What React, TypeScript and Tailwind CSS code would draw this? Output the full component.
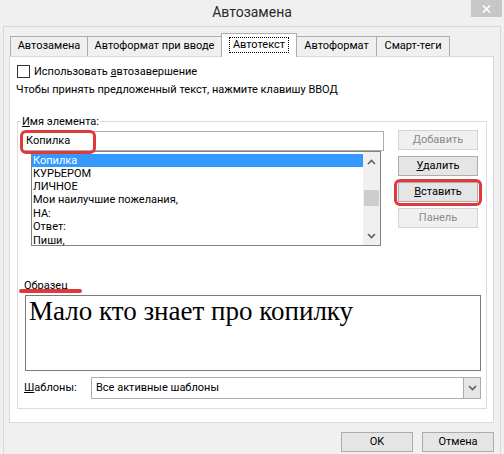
import React from "react";

const tabs = [
    { label: "Автозамена", w: "w-[77px]", cls: "border-l border-t" },
    { label: "Автоформат при вводе", w: "w-[134px]", cls: "border-l border-t" },
    { label: "Автотекст", w: "w-[76px]", active: true, cls: "" },
    { label: "Автоформат", w: "w-[80px]", cls: "border-r border-t" },
    { label: "Смарт-теги", w: "w-[73px]", cls: "border-r border-t" },
];

const items = ["Копилка", "КУРЬЕРОМ", "ЛИЧНОЕ", "Мои наилучшие пожелания,", "НА:", "Ответ:", "Пиши,"];

const Chevron = ({ up }: { up?: boolean }) => (
    <svg width="9" height="6" viewBox="0 0 9 6">
        <path
            d={up ? "M1 5 L4.5 1.5 L8 5" : "M1 1 L4.5 4.5 L8 1"}
            fill="none"
            stroke="#606060"
            strokeWidth="1.6"
        />
    </svg>
);

const SideButton = ({ children, disabled }: { children: React.ReactNode; disabled?: boolean }) => (
    <div
        className={`w-[80px] h-[20px] flex items-center justify-center border ${
            disabled
                ? "bg-[#f0f0f0] border-[#d5d5d5] text-[#8a8a8a]"
                : "bg-[#e5e5e5] border-[#acacac] text-black"
        }`}>
        {children}
    </div>
);

export default function App() {
    return (
        <div
            className="w-[504px] h-[454px] bg-[#f0f0f0] flex flex-col overflow-hidden text-[11px] text-black whitespace-nowrap"
            style={{ fontFamily: 'Roboto, "Noto Sans", sans-serif' }}>
            {/* title bar */}
            <div className="h-[26px] relative flex items-center justify-center">
                <span className="text-[14px] text-[#2b2b2b] -mt-[1px]">Автозамена</span>
                <div className="absolute right-[2px] top-0 w-[31px] h-[17px] bg-[#c7c7c7] flex items-center justify-center">
                    <svg width="9" height="8" viewBox="0 0 9 8">
                        <path d="M1 0.5 L8 7.5 M8 0.5 L1 7.5" stroke="#fff" strokeWidth="1.6" />
                    </svg>
                </div>
            </div>

            <div className="flex-1 mx-[3px] border-x border-t border-[#d9d9d9] pt-[6px] pl-[5px]">
                {/* tabs */}
                <div className="flex items-end h-[24px] ml-[1px] -mb-[1px] relative z-10">
                    {tabs.map((t) =>
                        t.active ? (
                            <div
                                key={t.label}
                                className={`${t.w} h-[24px] bg-white border-l border-t border-r border-[#acacac] flex items-start justify-center pt-[4px]`}>
                                <span className="px-[3px] leading-[14px] outline outline-1 outline-dotted outline-black">
                                    {t.label}
                                </span>
                            </div>
                        ) : (
                            <div
                                key={t.label}
                                className={`${t.w} h-[20px] mb-[1px] bg-[#f0f0f0] ${t.cls} border-[#acacac] flex items-center justify-center`}>
                                {t.label}
                            </div>
                        )
                    )}
                </div>

                {/* panel */}
                <div className="w-[485px] h-[367px] bg-white border border-[#d9d9d9] flex flex-col pt-[8px]">
                    <div className="flex items-center h-[13px] pl-[7px]">
                        <div className="w-[13px] h-[13px] border border-[#333] bg-white" />
                        <span className="ml-[4px] leading-[13px]">
                            Использовать <span className="underline">а</span>втозавершение
                        </span>
                    </div>
                    <div className="mt-[5px] h-[13px] leading-[13px] pl-[6px]">
                        Чтобы принять предложенный текст, нажмите клавишу ВВОД
                    </div>

                    {/* group box */}
                    <div className="relative mt-[25px] ml-[7px] w-[470px] h-[288px] border border-[#dcdcdc] flex flex-col">
                        <span className="absolute -top-[8px] left-[3px] bg-white px-[1px] leading-[15px]">
                            <span className="underline">И</span>мя элемента:
                        </span>

                        <div className="flex items-start pt-[8px]">
                            <div className="flex flex-col ml-[4px] mt-[1px]">
                                <div className="relative w-[362px] h-[20px] border border-[#abadb3] flex items-center pl-[3px]">
                                    Копилка
                                    <div className="absolute -left-[3px] -top-[2px] w-[76px] h-[24px] border-[3px] border-[#e0393b] rounded-[6px]" />
                                </div>
                                <div className="ml-[9px] w-[350px] h-[95px] border border-[#828282] flex">
                                    <div className="flex-1 flex flex-col pt-[2px] leading-[13px]">
                                        {items.map((it, i) => (
                                            <div
                                                key={it}
                                                className={`pl-[1px] ${
                                                    i === 0 ? "bg-[#3399ff] text-white" : ""
                                                } ${i === 3 || i === 5 ? "h-[14px] leading-[14px]" : "h-[13px]"}`}>
                                                {it}
                                            </div>
                                        ))}
                                    </div>
                                    <div className="w-[17px] bg-[#f0f0f0] flex flex-col items-center">
                                        <div className="h-[20px] flex items-center justify-center">
                                            <Chevron up />
                                        </div>
                                        <div className="mt-[18px] w-[15px] h-[16px] bg-[#cdcdcd]" />
                                        <div className="flex-1" />
                                        <div className="h-[18px] flex items-center justify-center">
                                            <Chevron />
                                        </div>
                                    </div>
                                </div>
                            </div>
                            <div className="ml-[14px] flex flex-col gap-[6px]">
                                <SideButton disabled>Добавить</SideButton>
                                <SideButton>
                                    <span>
                                        <span className="underline">У</span>далить
                                    </span>
                                </SideButton>
                                <div className="relative">
                                    <SideButton>
                                        <span>
                                            <span className="underline">В</span>ставить
                                        </span>
                                    </SideButton>
                                    <div className="absolute -left-[4px] -top-[3px] w-[88px] h-[27px] border-[3px] border-[#e0393b] rounded-[6px]" />
                                </div>
                                <SideButton disabled>Панель</SideButton>
                            </div>
                        </div>

                        <div className="relative mt-[33px] ml-[6px] h-[13px] leading-[13px] w-fit">
                            Образец
                            <div className="absolute -left-[5px] top-[10px] w-[63px] h-[4px] rounded-full bg-[#e0393b]" />
                        </div>
                        <div
                            className="mt-[3px] ml-[7px] w-[456px] h-[76px] border border-[#7a7a7a] pl-[3px] text-[27px] leading-[30px]"
                            style={{ fontFamily: '"Liberation Serif", serif' }}>
                            Мало кто знает про копилку
                        </div>

                        <div className="mt-[6px] ml-[6px] flex items-center">
                            <div className="w-[67px]">
                                <span className="underline">Ш</span>аблоны:
                            </div>
                            <div className="w-[390px] h-[22px] border border-[#acacac] flex items-center">
                                <span className="flex-1 pl-[4px]">Все активные шаблоны</span>
                                <div className="w-[17px] h-[20px] bg-[#e5e5e5] border-l border-[#acacac] flex items-center justify-center">
                                    <Chevron />
                                </div>
                            </div>
                        </div>
                    </div>
                </div>

                {/* dialog buttons */}
                <div className="w-[485px] flex justify-end gap-[9px] mt-[9px]">
                    <div className="w-[72px] h-[20px] bg-[#e5e5e5] border border-[#acacac] flex items-center justify-center">
                        OK
                    </div>
                    <div className="w-[72px] h-[20px] bg-[#e5e5e5] border border-[#acacac] flex items-center justify-center">
                        Отмена
                    </div>
                </div>
            </div>
        </div>
    );
}
